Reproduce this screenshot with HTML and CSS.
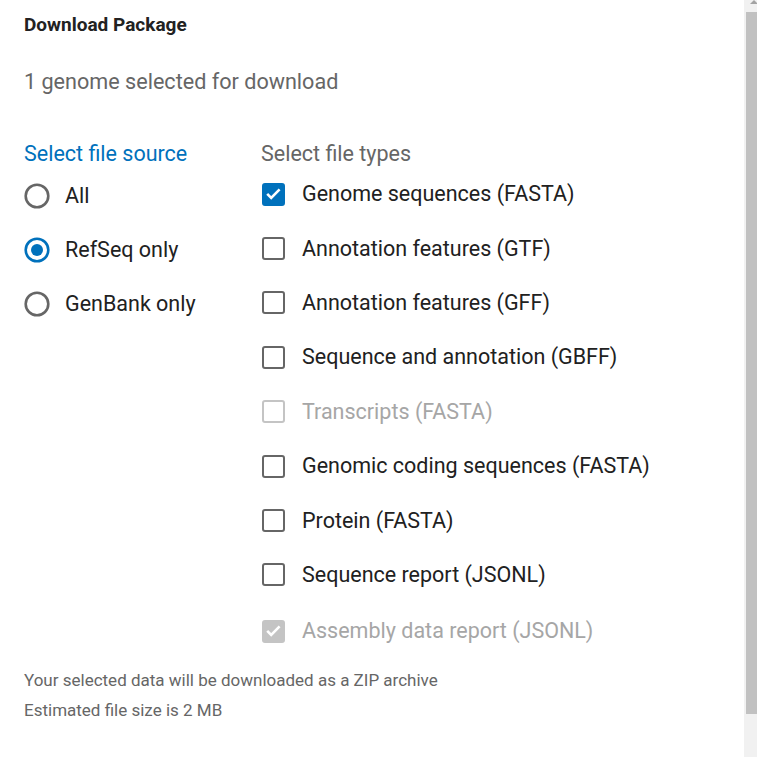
FILE: index.html
```html
<!DOCTYPE html>
<html>
<head>
<meta charset="utf-8">
<link rel="stylesheet" href="styles.css">
</head>
<body>
<div class="page">
  <div class="main">
    <h2 class="title">Download Package</h2>
    <p class="subtitle">1 genome selected for download</p>
    <div class="columns">
      <div class="col col-source">
        <div class="col-head head-blue">Select file source</div>
        <div class="row">
          <svg class="radio" viewBox="0 0 26 26"><circle cx="13" cy="13" r="11.3" fill="none" stroke="#666" stroke-width="2.6"/></svg>
          <span class="label">All</span>
        </div>
        <div class="row">
          <svg class="radio" viewBox="0 0 26 26"><circle cx="13" cy="13" r="11.3" fill="none" stroke="#0071bc" stroke-width="2.6"/><circle cx="13" cy="13" r="6" fill="#0071bc"/></svg>
          <span class="label">RefSeq only</span>
        </div>
        <div class="row">
          <svg class="radio" viewBox="0 0 26 26"><circle cx="13" cy="13" r="11.3" fill="none" stroke="#666" stroke-width="2.6"/></svg>
          <span class="label">GenBank only</span>
        </div>
      </div>
      <div class="col col-types">
        <div class="col-head head-gray">Select file types</div>
        <div class="checks">
          <div class="crow">
            <span class="box checked"><svg viewBox="0 0 23 23"><path d="M5.2 11.8l4 4 8.4-8.4" fill="none" stroke="#fff" stroke-width="2.6"/></svg></span>
            <span class="label">Genome sequences (FASTA)</span>
          </div>
          <div class="crow"><span class="box"></span><span class="label">Annotation features (GTF)</span></div>
          <div class="crow"><span class="box"></span><span class="label">Annotation features (GFF)</span></div>
          <div class="crow"><span class="box"></span><span class="label">Sequence and annotation (GBFF)</span></div>
          <div class="crow disabled"><span class="box"></span><span class="label">Transcripts (FASTA)</span></div>
          <div class="crow"><span class="box"></span><span class="label">Genomic coding sequences (FASTA)</span></div>
          <div class="crow"><span class="box"></span><span class="label">Protein (FASTA)</span></div>
          <div class="crow"><span class="box"></span><span class="label">Sequence report (JSONL)</span></div>
          <div class="crow disabled last">
            <span class="box checked"><svg viewBox="0 0 23 23"><path d="M5.2 11.8l4 4 8.4-8.4" fill="none" stroke="#fff" stroke-width="2.6"/></svg></span>
            <span class="label">Assembly data report (JSONL)</span>
          </div>
        </div>
      </div>
    </div>
    <div class="footer">
      <p class="note">Your selected data will be downloaded as a ZIP archive</p>
      <p class="note">Estimated file size is 2 MB</p>
    </div>
  </div>
  <div class="scrollbar">
    <div class="arrow"></div>
    <div class="thumb"></div>
  </div>
</div>
</body>
</html>
```
FILE: styles.css
```css
html, body {
  margin: 0;
  padding: 0;
  background: #fff;
}
body {
  font-family: Roboto, "Liberation Sans", sans-serif;
  color: #212121;
}
.page {
  display: flex;
  height: 757px;
  overflow: hidden;
}
.main {
  flex: 1;
  padding-left: 24px;
  background: #fff;
}
.title {
  margin: 15px 0 0;
  font-size: 19px;
  line-height: 20px;
  font-weight: 700;
  color: #222;
}
.subtitle {
  margin: 35px 0 0;
  font-size: 21.6px;
  line-height: 24px;
  color: #666;
}
.columns {
  display: flex;
  margin-top: 48px;
}
.col-source {
  width: 237px;
}
.col-head {
  font-size: 21.5px;
  line-height: 24px;
}
.head-blue { color: #0071bc; }
.head-gray { color: #666; }
.row {
  display: flex;
  align-items: center;
  height: 54px;
}
.col-source .col-head { margin-bottom: 3px; }
.radio {
  width: 26px;
  height: 26px;
  margin-right: 15px;
  flex: none;
}
.label {
  font-size: 21.5px;
  line-height: 24px;
}
.checks {
  margin-top: 1px;
}
.crow {
  display: flex;
  align-items: center;
  height: 54.4px;
}
.crow.last {
  margin-top: 2px;
}
.box {
  width: 23px;
  height: 23px;
  box-sizing: border-box;
  border: 2.5px solid #666;
  border-radius: 3px;
  margin: 0 17px 0 1px;
  flex: none;
  display: flex;
}
.box svg {
  width: 23px;
  height: 23px;
  margin: -2.5px;
}
.box.checked {
  background: #0071bc;
  border-color: #0071bc;
}
.crow.disabled .box {
  border-color: #c4c4c4;
}
.crow.disabled .box.checked {
  background: #c4c4c4;
}
.crow.disabled .label {
  color: #a6a6a6;
}
.footer {
  margin-top: 6px;
}
.note {
  margin: 0;
  font-size: 17px;
  line-height: 30px;
  color: #666;
}
.scrollbar {
  width: 13px;
  flex: none;
  background: #f1f1f1;
  position: relative;
}
.arrow {
  position: absolute;
  top: 0;
  left: 6px;
  width: 0;
  height: 0;
  border-left: 4px solid transparent;
  border-right: 4px solid transparent;
  border-bottom: 4px solid #a3a3a3;
}
.thumb {
  margin: 12px 0 0 2px;
  height: 702px;
  background: #c1c1c1;
}
```
